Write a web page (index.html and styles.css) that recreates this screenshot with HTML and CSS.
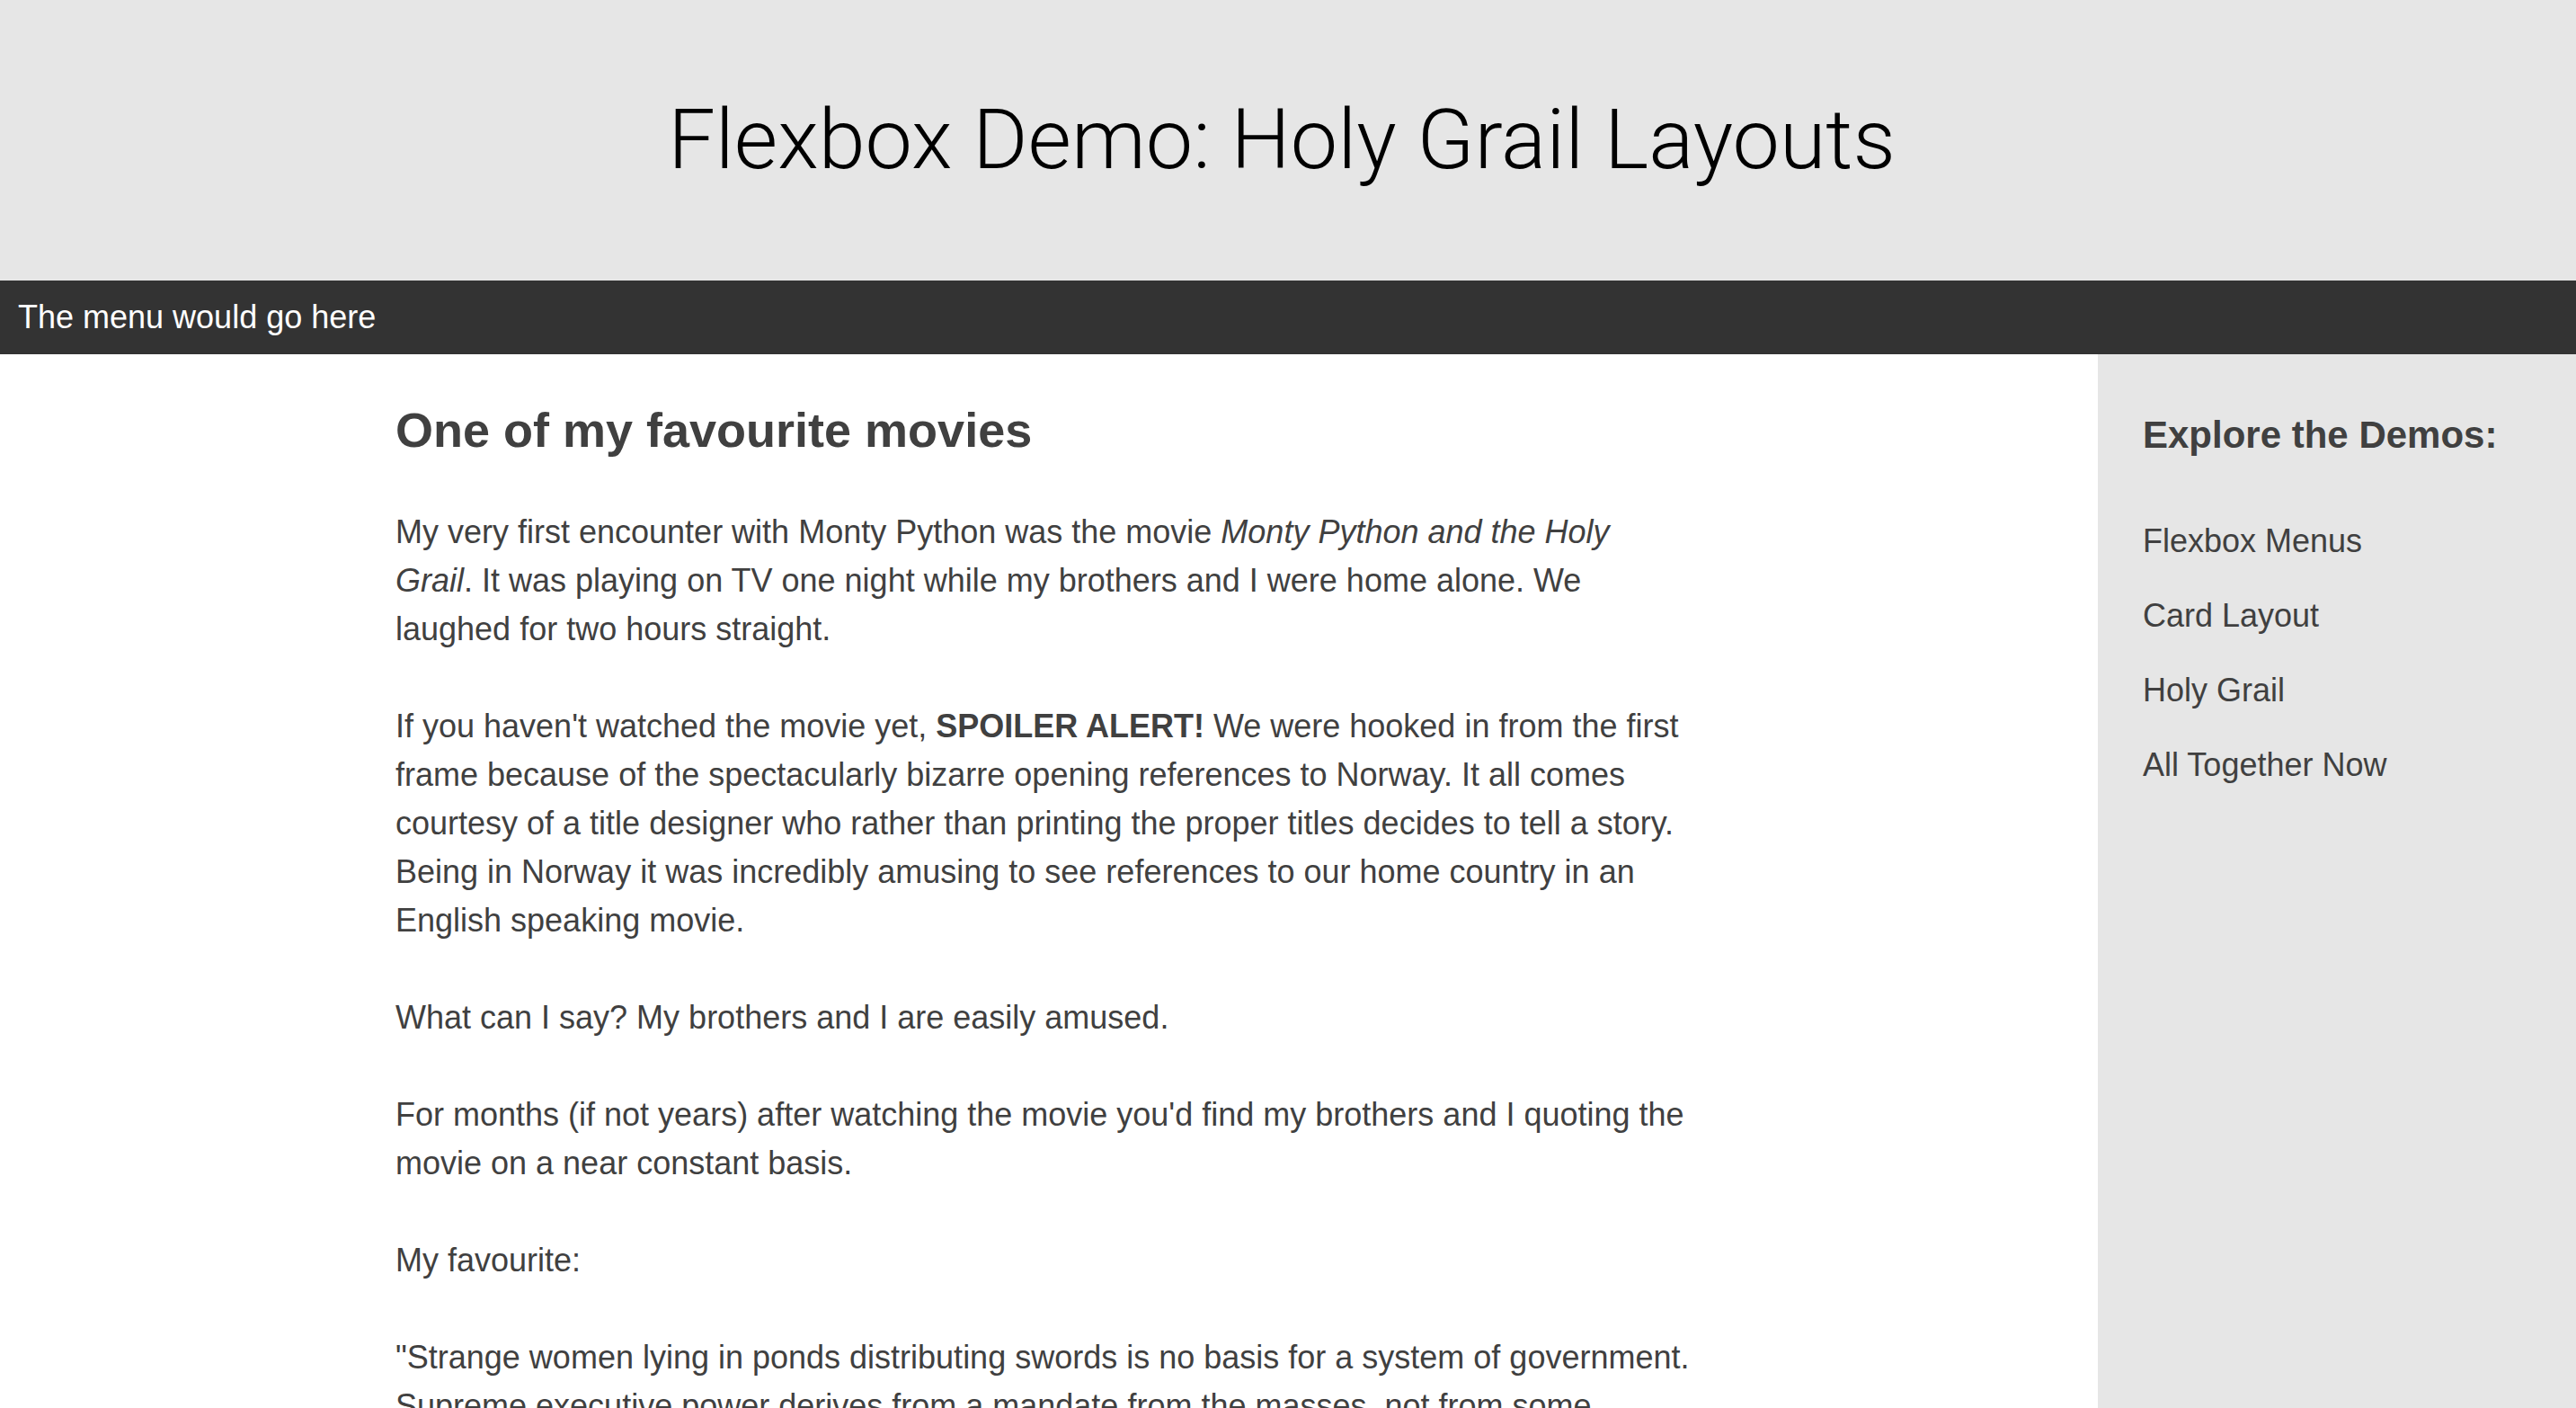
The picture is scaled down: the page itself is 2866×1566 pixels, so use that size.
FILE: index.html
```html
<!DOCTYPE html>
<html lang="en">
<head>
<meta charset="utf-8">
<title>Flexbox Demo: Holy Grail Layouts</title>
<link rel="stylesheet" href="styles.css">
</head>
<body>
<header class="site-header">
  <h1 class="site-title">Flexbox Demo: Holy Grail Layouts</h1>
</header>
<nav class="site-nav">The menu would go here</nav>
<div class="page">
  <main class="main">
    <article class="content">
      <h2 class="content-title">One of my favourite movies</h2>
      <p>My very first encounter with Monty Python was the movie <em>Monty Python and the Holy Grail</em>. It was playing on TV one night while my brothers and I were home alone. We laughed for two hours straight.</p>
      <p>If you haven't watched the movie yet, <strong>SPOILER ALERT!</strong> We were hooked in from the first frame because of the spectacularly bizarre opening references to Norway. It all comes courtesy of a title designer who rather than printing the proper titles decides to tell a story. Being in Norway it was incredibly amusing to see references to our home country in an English speaking movie.</p>
      <p>What can I say? My brothers and I are easily amused.</p>
      <p>For months (if not years) after watching the movie you'd find my brothers and I quoting the movie on a near constant basis.</p>
      <p>My favourite:</p>
      <p>"Strange women lying in ponds distributing swords is no basis for a system of government. Supreme executive power derives from a mandate from the masses, not from some farcical aquatic ceremony."</p>
    </article>
  </main>
  <aside class="sidebar">
    <h3 class="sidebar-title">Explore the Demos:</h3>
    <ul class="demo-list">
      <li><a href="#">Flexbox Menus</a></li>
      <li><a href="#">Card Layout</a></li>
      <li><a href="#">Holy Grail</a></li>
      <li><a href="#">All Together Now</a></li>
    </ul>
  </aside>
</div>
</body>
</html>
```

FILE: styles.css
```css
html, body {
  margin: 0;
  padding: 0;
}
body {
  font-family: "Liberation Sans", Arial, Helvetica, sans-serif;
  font-size: 36px;
  line-height: 1.5;
  color: #404040;
  background: #fff;
  height: 1566px;
  overflow: hidden;
  display: flex;
  flex-direction: column;
}
.site-header {
  background: #e6e6e6;
  height: 312px;
  display: flex;
  align-items: center;
  justify-content: center;
  flex: none;
  padding-right: 14px;
}
.site-title {
  margin: 0;
  font-family: Roboto, "Liberation Sans", sans-serif;
  font-weight: 300;
  font-size: 93.5px;
  line-height: 1;
  color: #000;
}
.site-nav {
  background: #333;
  color: #fff;
  height: 82px;
  flex: none;
  display: flex;
  align-items: center;
  padding: 0 20px;
  font-size: 36px;
}
.page {
  display: flex;
  flex: 1;
  min-height: 0;
}
.main {
  flex: 1;
  padding-left: 440px;
}
.content {
  width: 1440px;
}
.content-title {
  font-size: 54px;
  font-weight: bold;
  line-height: 1.2;
  margin: 52px 0 54px;
}
.content p {
  margin: 0 0 54px;
}
.sidebar {
  width: 482px;
  flex: none;
  background: #e6e6e6;
  padding-left: 50px;
}
.sidebar-title {
  font-size: 42px;
  font-weight: bold;
  margin: 65px 0 66px;
  line-height: 1.2;
}
.demo-list {
  list-style: none;
  margin: 0;
  padding: 0;
}
.demo-list li {
  margin-bottom: 29px;
}
.demo-list a {
  color: #404040;
  text-decoration: none;
}
```
